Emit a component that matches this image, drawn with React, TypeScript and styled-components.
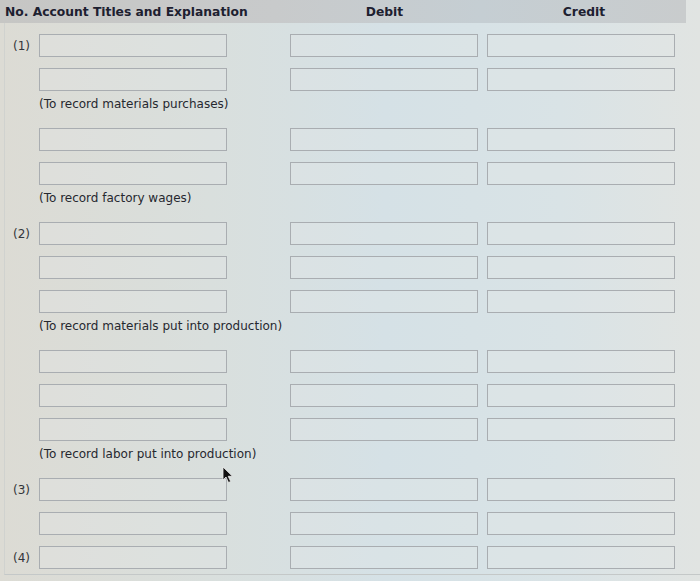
import React from "react";
import styled, { createGlobalStyle } from "styled-components";

const Global = createGlobalStyle`
  html, body { margin: 0; padding: 0; }
  body {
    width: 700px;
    height: 581px;
    overflow: hidden;
    background: linear-gradient(90deg, #dcdbd4 0%, #d9dfdd 30%, #d5e1e6 55%, #d9e3e6 80%, #e1e4e2 100%);
    font-family: "DejaVu Sans", Verdana, sans-serif;
    color: #2a2c33;
  }
`;

const Page = styled.div`
  position: relative;
  width: 700px;
  height: 581px;
`;

const HeaderBar = styled.div`
  display: grid;
  grid-template-columns: 290px 189px 9px 192px;
  align-items: center;
  height: 23px;
  width: 686px;
  background: linear-gradient(90deg, #c6c6c4 0%, #c8cacb 40%, #c5ced3 70%, #c9cccd 100%);
  font-weight: bold;
  font-size: 12.3px;
  color: #1d2030;
`;

const HeadCell = styled.div<{ $center?: boolean }>`
  padding-left: ${(p) => (p.$center ? "0" : "5px")};
  text-align: ${(p) => (p.$center ? "center" : "left")};
  white-space: nowrap;
`;

const Body = styled.div`
  display: flex;
  flex-direction: column;
  gap: 11px;
  padding-top: 11px;
  margin-left: 4px;
  height: 552px;
  box-sizing: border-box;
  border-bottom: 1px solid #c4c8c8;
  border-left: 1px solid #d0d2cf;
`;

const Row = styled.div`
  display: grid;
  grid-template-columns: 34px 188px 63px 188px 9px 188px;
  align-items: center;
  height: 23px;
`;

const No = styled.div`
  font-size: 12px;
  padding-left: 8px;
  color: #33353a;
`;

const Field = styled.div`
  box-sizing: border-box;
  height: 23px;
  border: 1px solid #a9adb1;
  background: rgba(228, 232, 232, 0.3);
`;

const Spacer = styled.div``;

const Note = styled.div`
  margin: -6px 0 5px 34px;
  height: 16px;
  line-height: 16px;
  font-size: 12px;
  color: #26282f;
  white-space: nowrap;
`;

const Cursor = styled.svg`
  position: absolute;
  left: 222px;
  top: 466px;
`;

type Item = { kind: "row"; no?: string } | { kind: "note"; text: string };

const items: Item[] = [
  { kind: "row", no: "(1)" },
  { kind: "row" },
  { kind: "note", text: "(To record materials purchases)" },
  { kind: "row" },
  { kind: "row" },
  { kind: "note", text: "(To record factory wages)" },
  { kind: "row", no: "(2)" },
  { kind: "row" },
  { kind: "row" },
  { kind: "note", text: "(To record materials put into production)" },
  { kind: "row" },
  { kind: "row" },
  { kind: "row" },
  { kind: "note", text: "(To record labor put into production)" },
  { kind: "row", no: "(3)" },
  { kind: "row" },
  { kind: "row", no: "(4)" },
];

export default function App() {
  return (
    <Page>
      <Global />
      <HeaderBar>
        <HeadCell>No. Account Titles and Explanation</HeadCell>
        <HeadCell $center>Debit</HeadCell>
        <Spacer />
        <HeadCell $center>Credit</HeadCell>
      </HeaderBar>
      <Body>
        {items.map((it, i) =>
          it.kind === "row" ? (
            <Row key={i}>
              <No>{it.no ?? ""}</No>
              <Field />
              <Spacer />
              <Field />
              <Spacer />
              <Field />
            </Row>
          ) : (
            <Note key={i}>{it.text}</Note>
          )
        )}
      </Body>
      <Cursor width="12" height="18" viewBox="0 0 12 18">
        <path d="M1 1 L1 14 L4 11 L6.5 16.5 L8.7 15.5 L6.2 10.3 L10.5 10.3 Z" fill="#111" stroke="#eee" strokeWidth="0.8" />
      </Cursor>
    </Page>
  );
}
